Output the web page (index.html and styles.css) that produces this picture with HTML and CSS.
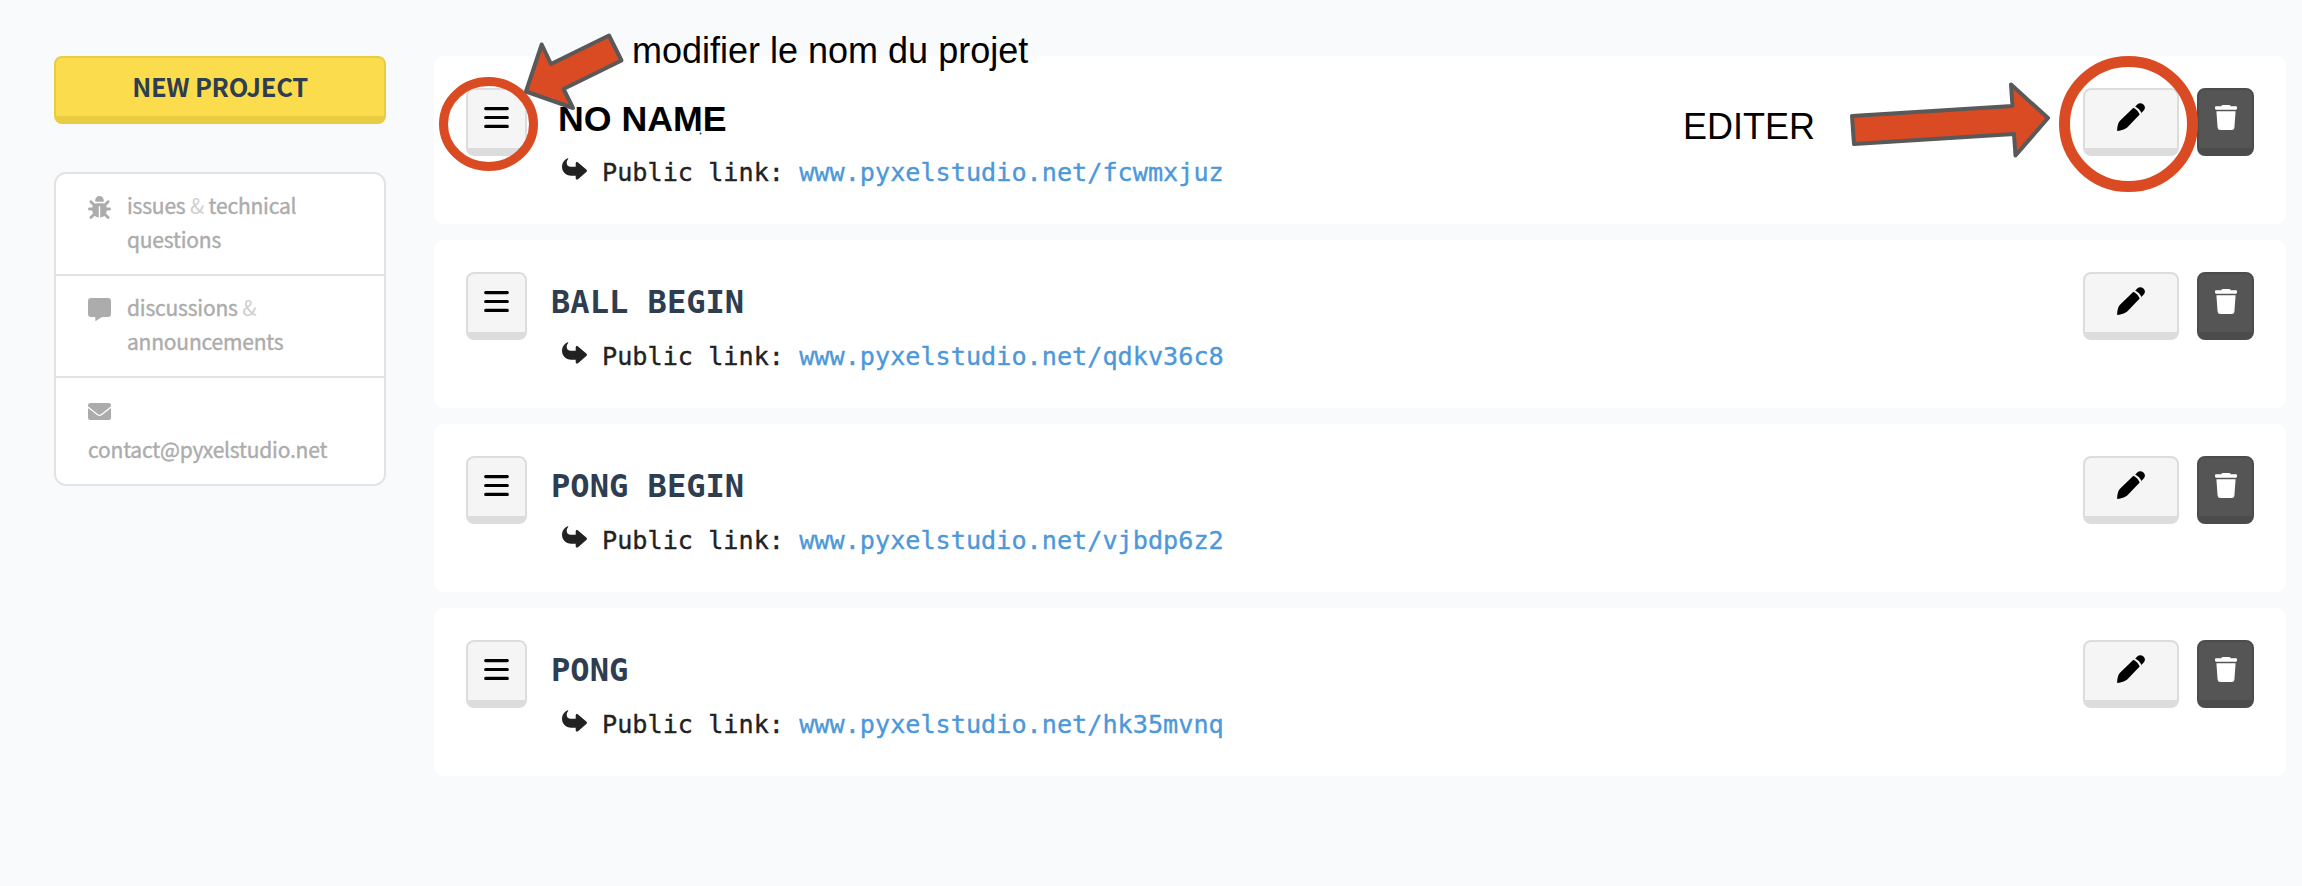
FILE: index.html
```html
<!DOCTYPE html>
<html lang="fr">
<head>
<meta charset="utf-8">
<title>Pyxel Studio</title>
<link rel="stylesheet" href="styles.css">
</head>
<body>
<svg class="defs" width="0" height="0">
  <symbol id="bars" viewBox="0 0 25 22"><path d="M1.700 1.600H23.300M1.700 10.500H23.300M1.700 19.400H23.300" stroke="currentColor" stroke-width="3.200" stroke-linecap="round"/></symbol>
  <symbol id="share" viewBox="0 0 25 22"><path d="M5.600 0.200C2 1.800 0 5 0 8.600C0 14 3.800 17.700 9.200 17.700H13.700V20.200C13.700 21.500 15 22 16 21.200L24.300 14C25.200 13.200 25.200 12.200 24.300 11.400L16 4.500C15 3.700 13.700 4.200 13.700 5.500V8.800H9C6.300 8.800 4.700 7.200 4.700 4.800C4.700 3.200 5.400 2.200 6.200 1.100C6.600 0.500 6.200 0 5.600 0.200Z"/></symbol>
  <symbol id="pencil" viewBox="0 0 28 28"><path d="M18.200 3.700L20.200 1.600C22.200 -0.300 24.500 -0.200 26.400 1.600C28.300 3.500 28.500 5.800 26.500 7.800L24.300 10C23.600 7.500 20.800 4.500 18.200 3.700ZM16.400 4.800C19.200 6 21.700 8.600 22.700 11.600L10.200 24.500C8.500 26.200 5.500 27 1.100 27.900C0.400 28.100 0 27.600 0.100 27C0.400 22.500 1.200 19.500 3 17.700Z"/></symbol>
  <symbol id="trash" viewBox="0 0 22 25"><path d="M1.200 1.300H6C6.500 0.300 7.500 0 8.500 0H13.500C14.500 0 15.500 0.300 16 1.300H20.800C21.700 1.300 22 1.900 22 2.700C22 4.200 21.500 4.700 20.500 4.700H1.500C0.500 4.700 0 4.200 0 2.700C0 1.900 0.300 1.300 1.200 1.300ZM1.400 6.300H20.600L19.400 22.600C19.300 24.200 18.400 25 17 25H5C3.600 25 2.700 24.200 2.600 22.600Z"/></symbol>
</svg>
<div class="page">
  <aside class="side">
    <button class="btn new">NEW PROJECT</button>
    <nav class="links">
      <a class="item"><svg class="ico" viewBox="0 0 512 512"><path d="M256 0c53 0 96 43 96 96v3.600c0 15.700-12.700 28.400-28.400 28.400H188.400c-15.700 0-28.400-12.700-28.400-28.400V96c0-53 43-96 96-96zM41.400 105.400c12.500-12.500 32.800-12.500 45.300 0l64 64c.7.7 1.300 1.400 1.900 2.100c14.200-7.300 30.400-11.400 47.500-11.400H312c17.100 0 33.200 4.100 47.500 11.400c.6-.7 1.200-1.400 1.900-2.100l64-64c12.500-12.500 32.800-12.500 45.300 0s12.500 32.800 0 45.300l-64 64c-.7.7-1.400 1.300-2.100 1.900c6.200 12 10.100 25.300 11.100 39.500H480c17.700 0 32 14.300 32 32s-14.300 32-32 32H416c0 24.600-5.500 47.800-15.400 68.600c2.200 1.300 4.200 2.900 6 4.800l64 64c12.500 12.500 12.500 32.800 0 45.300s-32.800 12.500-45.300 0l-63.100-63.100c-24.500 21.800-55.800 36.200-90.300 39.600V240c0-8.800-7.200-16-16-16s-16 7.200-16 16V479.200c-34.500-3.400-65.800-17.800-90.300-39.600L86.600 502.600c-12.500 12.500-32.800 12.500-45.300 0s-12.500-32.800 0-45.300l64-64c1.900-1.900 3.900-3.400 6-4.800C101.500 367.800 96 344.600 96 320H32c-17.700 0-32-14.300-32-32s14.300-32 32-32H96.300c1.100-14.100 5-27.500 11.100-39.500c-.7-.6-1.400-1.200-2.100-1.900l-64-64c-12.500-12.500-12.500-32.800 0-45.300z"/></svg><span>issues <i>&amp;</i> technical<br>questions</span></a>
      <a class="item"><svg class="ico" viewBox="0 0 23 23"><path d="M3 0H20Q23 0 23 3V16Q23 19 20 19H14L8.200 22.800Q7.300 23.300 7.300 22.300V19H3Q0 19 0 16V3Q0 0 3 0Z"/></svg><span>discussions <i>&amp;</i><br>announcements</span></a>
      <a class="item mail"><svg class="ico" viewBox="0 0 23 17"><path d="M2.500 0H20.500Q23 0 23 2V3.200L13.300 11Q11.500 12.300 9.700 11L0 3.200V2Q0 0 2.500 0ZM0 5L8.900 12.100Q11.500 14 14.100 12.100L23 5V14.500Q23 17 20.500 17H2.500Q0 17 0 14.500Z"/></svg><span>contact@pyxelstudio.net</span></a>
    </nav>
  </aside>
  <main class="cards">
    <section class="card">
      <button class="btn menu"><svg class="i-bars"><use href="#bars"/></svg></button>
      <div class="body"><h2 class="plain">NO NAME</h2><p><svg class="i-share"><use href="#share"/></svg>Public link: <a>www.pyxelstudio.net/fcwmxjuz</a></p></div>
      <button class="btn edit"><svg class="i-pencil"><use href="#pencil"/></svg></button>
      <button class="btn del"><svg class="i-trash"><use href="#trash"/></svg></button>
    </section>
    <section class="card">
      <button class="btn menu"><svg class="i-bars"><use href="#bars"/></svg></button>
      <div class="body"><h2>BALL BEGIN</h2><p><svg class="i-share"><use href="#share"/></svg>Public link: <a>www.pyxelstudio.net/qdkv36c8</a></p></div>
      <button class="btn edit"><svg class="i-pencil"><use href="#pencil"/></svg></button>
      <button class="btn del"><svg class="i-trash"><use href="#trash"/></svg></button>
    </section>
    <section class="card">
      <button class="btn menu"><svg class="i-bars"><use href="#bars"/></svg></button>
      <div class="body"><h2>PONG BEGIN</h2><p><svg class="i-share"><use href="#share"/></svg>Public link: <a>www.pyxelstudio.net/vjbdp6z2</a></p></div>
      <button class="btn edit"><svg class="i-pencil"><use href="#pencil"/></svg></button>
      <button class="btn del"><svg class="i-trash"><use href="#trash"/></svg></button>
    </section>
    <section class="card">
      <button class="btn menu"><svg class="i-bars"><use href="#bars"/></svg></button>
      <div class="body"><h2>PONG</h2><p><svg class="i-share"><use href="#share"/></svg>Public link: <a>www.pyxelstudio.net/hk35mvnq</a></p></div>
      <button class="btn edit"><svg class="i-pencil"><use href="#pencil"/></svg></button>
      <button class="btn del"><svg class="i-trash"><use href="#trash"/></svg></button>
    </section>
  </main>
</div>
<svg class="notes" viewBox="0 0 2302 886">
  <g class="ring">
    <ellipse cx="488.500" cy="124" rx="45" ry="42.500" stroke-width="9"/>
    <ellipse cx="2128.500" cy="124" rx="64" ry="62.500" stroke-width="11"/>
  </g>
  <g class="arrow">
    <path d="M526 91.500L541.700 44.500L551 64L609 35.500L621.500 60.500L563.500 89L573 108Z"/>
    <path d="M1852 116L2012.500 106L2011 84.500L2048 118L2015.500 155.500L2014 134L1854 144Z"/>
  </g>
  <circle cx="700.500" cy="133.500" r="1" fill="#2e3d50"/>
  <text x="632" y="63">modifier le nom du projet</text>
  <text x="1683" y="139">EDITER</text>
</svg>
</body>
</html>
```
FILE: styles.css
```css
* { box-sizing: border-box; }
body { margin: 0; height: 886px; overflow: hidden; background: #f9fafc; font-family: "Noto Sans CJK SC", "Noto Sans", sans-serif; }
.defs { position: absolute; }
.page { display: flex; gap: 48px; padding: 56px 16px 0 54px; }
.side { width: 332px; display: flex; flex-direction: column; gap: 48px; }
.btn { height: 68px; padding: 0; border: 2px solid #dcdcdc; border-bottom-width: 8px; border-radius: 8px; background: #f5f5f5; color: #000; display: flex; justify-content: center; align-items: flex-start; flex: none; }
.new { border-color: #e8cd43; background: #fbdc4c; color: #2e3d50; font: 700 25.500px/56px "Noto Sans CJK SC", "Noto Sans", sans-serif; letter-spacing: -0.300px; }
.links { border: 2px solid #e3e3e3; border-radius: 12px; background: #fff; overflow: hidden; }
.item { height: 102px; padding: 14px 0 0 32px; display: flex; gap: 16px; border-bottom: 2px solid #e3e3e3; color: #acacac; font-size: 21px; line-height: 34px; letter-spacing: -0.200px; -webkit-text-stroke: 0.400px currentColor; }
.item i { font-style: normal; color: #cfcfcf; -webkit-text-stroke: 0; }
.ico { width: 23px; height: 23px; margin-top: 8px; fill: #acacac; flex: none; }
.mail { height: 106px; border: 0; flex-direction: column; gap: 12px; padding-top: 17px; }
.mail .ico { height: 17px; }
.cards { flex: 1; display: flex; flex-direction: column; gap: 16px; }
.card { height: 168px; padding: 32px; border-radius: 10px; background: #fff; display: flex; }
.menu { width: 61px; }
.edit { width: 96px; margin-right: 18px; }
.del { width: 57px; background: #555; border-color: #4c4c4c; color: #fff; }
.btn svg { fill: currentColor; }
.i-bars { width: 25px; height: 22px; margin-top: 17px; }
.i-pencil { width: 28px; height: 28px; margin-top: 13px; }
.i-trash { width: 22px; height: 25px; margin-top: 15px; }
.body { flex: 1; padding-left: 24px; }
h2 { margin: 0; height: 60px; font: 700 32.100px/60px "DejaVu Sans Mono", monospace; color: #2e3d50; }
.plain { padding-left: 7px; font: 700 35.700px/62px "Liberation Sans", Arial, sans-serif; color: #000; }
p { margin: 0; padding-left: 11px; display: flex; white-space: pre; font: 25.200px/50px "DejaVu Sans Mono", monospace; color: #222; -webkit-text-stroke: 0.350px currentColor; }
p a { color: #4d98d9; }
.i-share { width: 25px; height: 22px; margin: 10px 15px 0 0; fill: #222; -webkit-text-stroke: 0; }
.notes { position: absolute; left: 0; top: 0; width: 2302px; height: 886px; font: 36px "Liberation Sans", Arial, sans-serif; }
.ring { fill: none; stroke: #da4b23; }
.arrow { fill: #da4b23; stroke: #595959; stroke-width: 4; stroke-linejoin: round; }
```
